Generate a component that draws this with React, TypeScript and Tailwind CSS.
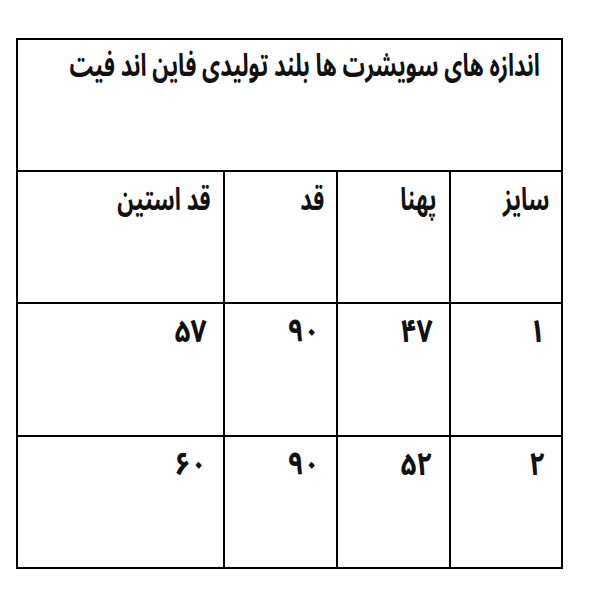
import React from "react";

const rows: string[][] = [
  ["سایز", "پهنا", "قد", "قد استین"],
  ["۱", "۴۷", "۹۰", "۵۷"],
  ["۲", "۵۲", "۹۰", "۶۰"],
];

export default function App() {
  return (
    <div className="w-[600px] h-[600px] bg-white pt-[38px] pl-[16px] font-['Noto_Sans_Arabic','DejaVu_Sans',sans-serif]">
      <div
        dir="rtl"
        className="w-[547px] grid grid-cols-[110px_111px_111px_205px] grid-rows-[130px_130px_131px_130px] gap-[2px] p-[2px] bg-black text-[#111]"
      >
        <div className="col-span-4 bg-white pr-[21px] pt-[6px] text-[31px] font-bold leading-[40px] whitespace-nowrap">
          <span className="inline-block origin-right scale-x-[0.715]">
            اندازه های سویشرت ها بلند تولیدی فاین اند فیت
          </span>
        </div>
        {rows.map((r, i) =>
          r.map((c, j) => (
            <div
              key={i + "-" + j}
              className={
                "bg-white pt-[8px] font-bold leading-[40px] whitespace-nowrap " +
                (i === 0 ? "pr-[12px] text-[31px]" : "pr-[16px] text-[32px]")
              }
            >
              <span
                className={
                  "inline-block origin-right " +
                  (i === 0 ? "scale-x-[0.72]" : "scale-x-[0.88]")
                }
              >
                {c}
              </span>
            </div>
          ))
        )}
      </div>
    </div>
  );
}
